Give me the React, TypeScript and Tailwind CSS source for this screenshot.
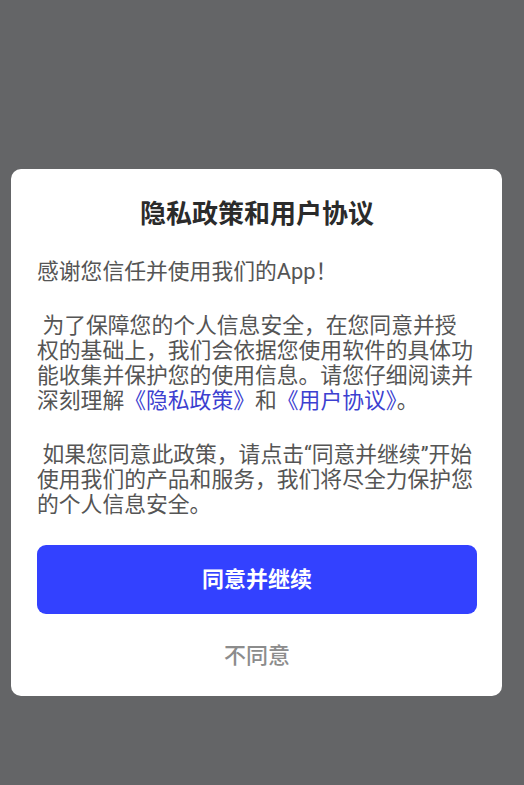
import React from "react";

export default function App() {
  const font = { fontFamily: 'Roboto, "Noto Sans CJK SC", sans-serif' };
  return (
    <div className="w-full h-[785px] bg-[#646567] pt-[169px] px-[11px]" style={font}>
      <div className="w-[491px] bg-white rounded-[10px] pt-[27px] pb-[25px] pl-[26px] pr-[25px] flex flex-col">
        <h1 className="text-center text-[26px] leading-[36px] font-bold text-[#2b2b2b]">隐私政策和用户协议</h1>
        <div className="mt-[27px] text-[21.8px] leading-[25px] text-[#555555]">
          <p>感谢您信任并使用我们的App！</p>
          <p className="mt-[29px]">
            {"\u00a0为了保障您的个人信息安全，在您同意并授权的基础上，我们会依据您使用软件的具体功能收集并保护您的使用信息。请您仔细阅读并深刻理解"}
            <span className="text-[#3c3fd0]">《隐私政策》</span>和<span className="text-[#3c3fd0]">《用户协议》</span>。
          </p>
          <p className="mt-[29px]">
            {"\u00a0如果您同意此政策，请点击“同意并继续”开始使用我们的产品和服务，我们将尽全力保护您的个人信息安全。"}
          </p>
        </div>
        <button className="mt-[28px] h-[69px] w-full rounded-[9px] bg-[#3341ff] text-white text-[22px] font-bold">
          同意并继续
        </button>
        <div className="mt-[27px] text-center text-[22px] leading-[30px] font-medium text-[#8c8c8c]">不同意</div>
      </div>
    </div>
  );
}
